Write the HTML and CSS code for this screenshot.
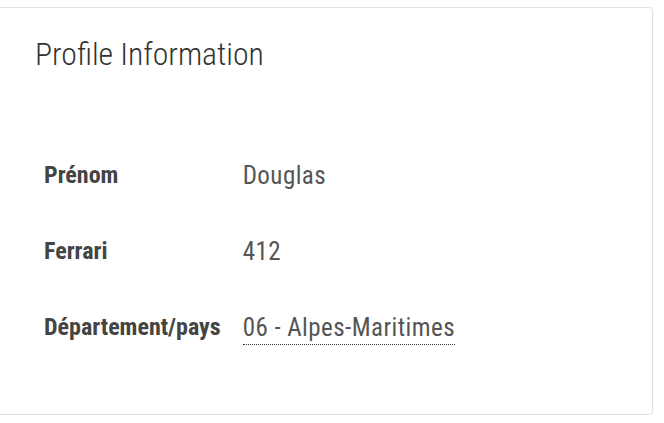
FILE: index.html
```html
<!DOCTYPE html>
<html>
<head>
<meta charset="utf-8">
<link rel="stylesheet" href="styles.css">
</head>
<body>
<div class="card">
  <h2 class="title">Profile Information</h2>
  <table class="info">
    <tr><th>Prénom</th><td>Douglas</td></tr>
    <tr><th>Ferrari</th><td>412</td></tr>
    <tr><th>Département/pays</th><td><span class="editable">06 - Alpes-Maritimes</span></td></tr>
  </table>
</div>
</body>
</html>
```
FILE: styles.css
```css
html, body { margin: 0; padding: 0; background: #fff; }
body { font-family: "Roboto Condensed", Roboto, "Liberation Sans", sans-serif; color: #333; }
.card {
  box-sizing: border-box;
  margin: 7px 11px 0 -4px;
  height: 408px;
  border: 1px solid #dfe1e8;
  border-radius: 4px;
  background: #fff;
  padding: 27px 0 0 38px;
  box-shadow: 0 1px 2px rgba(0,0,0,0.04);
}
.title {
  margin: 0;
  font-weight: 300;
  font-size: 31.7px;
  line-height: 40px;
  color: #333;
}
.info { border-collapse: collapse; margin-top: 62px; margin-left: 2px; }
.info th, .info td { text-align: left; height: 76px; padding: 0 9px 0 7px; vertical-align: middle; }
.info th { font-weight: 700; font-size: 24px; color: #444; padding-right: 15px; }
.info td { font-weight: 400; font-size: 25px; color: #555; letter-spacing: 0.45px; }
.editable { border-bottom: 1px dotted #333; padding-bottom: 2px; }
```
